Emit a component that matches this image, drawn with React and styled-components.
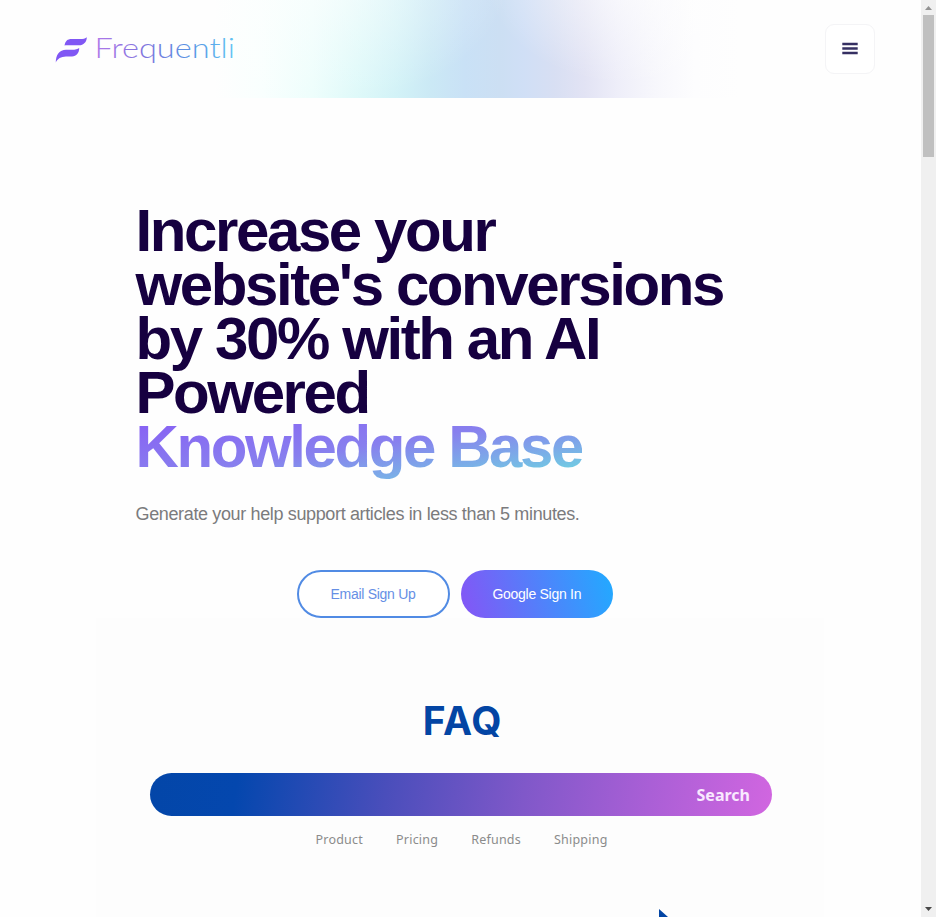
import React from "react";
import styled, { createGlobalStyle } from "styled-components";

const GlobalStyle = createGlobalStyle`
  * { box-sizing: border-box; }
  body {
    margin: 0;
    overflow: hidden;
    background: #fefefe;
    font-family: "Liberation Sans", Arial, sans-serif;
  }
`;

const Window = styled.div`
  display: grid;
  grid-template-columns: 1fr 15px;
  height: 917px;
  overflow: hidden;
`;

const Page = styled.div`
  display: flex;
  flex-direction: column;
  min-width: 0;
  overflow: hidden;
`;

const Header = styled.header`
  display: flex;
  align-items: flex-start;
  justify-content: space-between;
  flex: none;
  height: 98px;
  padding: 24px 46px 0 55px;
  background:
    radial-gradient(ellipse 190px 130px at 320px -25px, rgba(254, 254, 254, 0.7), rgba(254, 254, 254, 0)),
    radial-gradient(ellipse 150px 110px at 635px -25px, rgba(254, 254, 254, 0.75), rgba(254, 254, 254, 0)),
    linear-gradient(90deg,
      #fefefe 215px,
      #f9fffe 262px,
      #edfefc 312px,
      #ddf9f9 358px,
      #d2f2f7 398px,
      #cbe9f5 430px,
      #c9e1f6 465px,
      #ccdff3 500px,
      #d0dff6 524px,
      #d8dff3 555px,
      #e2e3f4 585px,
      #eeeef9 618px,
      #f7f7fc 655px,
      #fdfdfe 695px,
      #fefefe 740px);
`;

const Logo = styled.svg`
  display: block;
  width: 184px;
  height: 32px;
  margin-top: 10px;
  overflow: visible;
`;

const Wordmark = styled.text`
  font-family: Lato, sans-serif;
  font-size: 27px;
  font-weight: 300;
`;

const MenuButton = styled.button`
  display: grid;
  place-items: center;
  width: 50px;
  height: 50px;
  padding: 0 0 2px;
  border: 1px solid #f4f4f6;
  border-radius: 9px;
  background: #fff;
`;

const Hero = styled.main`
  flex: none;
  padding: 106px 0 0 135.5px;
`;

const Title = styled.h1`
  margin: 0;
  width: 620px;
  font-size: 60px;
  line-height: 54px;
  font-weight: 700;
  letter-spacing: -2.4px;
  color: #160040;
`;

const GradientText = styled.span`
  display: inline-block;
  margin-bottom: -14px;
  padding-bottom: 14px;
  background: linear-gradient(to bottom right, #8860f4 0%, #8880ee 45%, #7caae8 68%, #6cdae0 92%);
  background-clip: text;
  -webkit-background-clip: text;
  color: transparent;
`;

const Lead = styled.p`
  margin: 27px 0 0;
  font-size: 18px;
  line-height: 27px;
  letter-spacing: -0.36px;
  color: #7b7b7d;
`;

const Actions = styled.div`
  display: flex;
  gap: 11px;
  margin: 42px 0 0 161px;
`;

const Button = styled.button`
  width: ${(p) => (p.$filled ? 152 : 153)}px;
  height: 48px;
  padding: 0;
  border: ${(p) => (p.$filled ? "0" : "2px solid #518be4")};
  border-radius: 24px;
  background: ${(p) => (p.$filled ? "linear-gradient(75deg, #8059f6 5%, #24a8ff 97%)" : "#fff")};
  color: ${(p) => (p.$filled ? "#fff" : "#668fe5")};
  font-family: inherit;
  font-size: 14px;
  letter-spacing: -0.28px;
  text-indent: ${(p) => (p.$filled ? 0.6 : 0)}px;
`;

const FaqPanel = styled.section`
  display: flex;
  flex-direction: column;
  width: 728px;
  height: 302px;
  flex: none;
  margin-left: 96px;
  padding: 79px 52px 0 54px;
  background: #fdfdfd;
`;

const FaqTitle = styled.h2`
  flex: none;
  margin: 0;
  padding-left: 3px;
  font-family: Inter, sans-serif;
  font-size: 39px;
  line-height: 48px;
  font-weight: 700;
  letter-spacing: 0.8px;
  text-align: center;
  color: #0345a4;
`;

const SearchBar = styled.div`
  display: flex;
  flex: none;
  align-items: center;
  justify-content: flex-end;
  height: 43px;
  margin-top: 28px;
  padding-right: 22px;
  border-radius: 22px;
  background: linear-gradient(98deg, #0346a8 0%, #0447ae 14%, #4a4ebb 38%, #8058c9 60%, #aa5fd6 80%, #d166e0 100%);
  color: #f9e9ff;
  font-family: "Noto Sans", sans-serif;
  font-size: 16px;
  font-weight: 700;
  letter-spacing: 0;
`;

const Topics = styled.nav`
  display: flex;
  flex: none;
  gap: 33px;
  margin: 14px 0 0 165.5px;
`;

const Topic = styled.span`
  font-family: "Noto Sans", sans-serif;
  font-size: 12.5px;
  line-height: 20px;
  letter-spacing: 0.22px;
  color: #8b8b8b;
`;

const Pointer = styled.svg`
  display: block;
  flex: none;
  width: 20px;
  height: 24px;
  margin: 59px 0 0 508px;
`;

const Scrollbar = styled.div`
  display: flex;
  flex-direction: column;
  align-items: center;
  background: #f0f0f0;
`;

const Thumb = styled.div`
  width: 11px;
  height: 142px;
  margin-bottom: auto;
  background: #c0c0c0;
`;

const Arrow = styled.svg`
  display: block;
  width: 15px;
  height: 15px;
`;

const TOPICS = ["Product", "Pricing", "Refunds", "Shipping"];

function BrandLogo() {
  return (
    <Logo viewBox="0 0 184 32" aria-label="Frequentli">
      <defs>
        <linearGradient id="wordmark" gradientUnits="userSpaceOnUse" x1="42" y1="0" x2="180" y2="0">
          <stop offset="0" stopColor="#ae78e9" />
          <stop offset="0.32" stopColor="#8274de" />
          <stop offset="0.68" stopColor="#5894e3" />
          <stop offset="1" stopColor="#62c4f4" />
        </linearGradient>
      </defs>
      <path fill="#8057f4" d="M9.5 11.5C10.4 7 12.5 5 16.5 5H25C28 5 30.5 4.6 31.8 3.2C31.8 8 28.5 11.3 24 11.3H14C12 11.3 10.5 11.2 9.5 11.5Z" />
      <path fill="#8057f4" d="M.8 28.5C.8 20.5 4.5 16.2 11 15.8H17C20.5 15.8 22.5 15.2 24.2 14C24.2 19 21.5 22.3 17 22.5H11C6 22.7 2.6 24.5 .8 28.5Z" />
      <Wordmark x="39.5" y="24" fill="url(#wordmark)" textLength="140.5" lengthAdjust="spacingAndGlyphs">
        Frequentli
      </Wordmark>
    </Logo>
  );
}

export default function App() {
  return (
    <>
      <GlobalStyle />
      <Window>
        <Page>
          <Header>
            <BrandLogo />
            <MenuButton aria-label="Menu">
              <svg width="16" height="13" viewBox="0 0 16 13">
                <path d="M.3 2H15.7M.3 6.5H15.7M.3 11H15.7" stroke="#352f62" strokeWidth="2.3" />
              </svg>
            </MenuButton>
          </Header>
          <Hero>
            <Title>
              Increase your
              <br />
              website's conversions
              <br />
              by 30% with an AI
              <br />
              Powered
              <br />
              <GradientText>Knowledge Base</GradientText>
            </Title>
            <Lead>Generate your help support articles in less than 5 minutes.</Lead>
            <Actions>
              <Button>Email Sign Up</Button>
              <Button $filled>Google Sign In</Button>
            </Actions>
          </Hero>
          <FaqPanel>
            <FaqTitle>FAQ</FaqTitle>
            <SearchBar>Search</SearchBar>
            <Topics>
              {TOPICS.map((topic) => (
                <Topic key={topic}>{topic}</Topic>
              ))}
            </Topics>
            <Pointer viewBox="0 0 20 24">
              <path d="M1 0V24L19 16Z" fill="#0345a4" />
            </Pointer>
          </FaqPanel>
        </Page>
        <Scrollbar>
          <Arrow viewBox="0 0 15 15">
            <path d="M4 10L7.5 6L11 10Z" fill="#929292" />
          </Arrow>
          <Thumb />
          <Arrow viewBox="0 0 15 15">
            <path d="M4 5L7.5 9L11 5Z" fill="#484848" />
          </Arrow>
        </Scrollbar>
      </Window>
    </>
  );
}
